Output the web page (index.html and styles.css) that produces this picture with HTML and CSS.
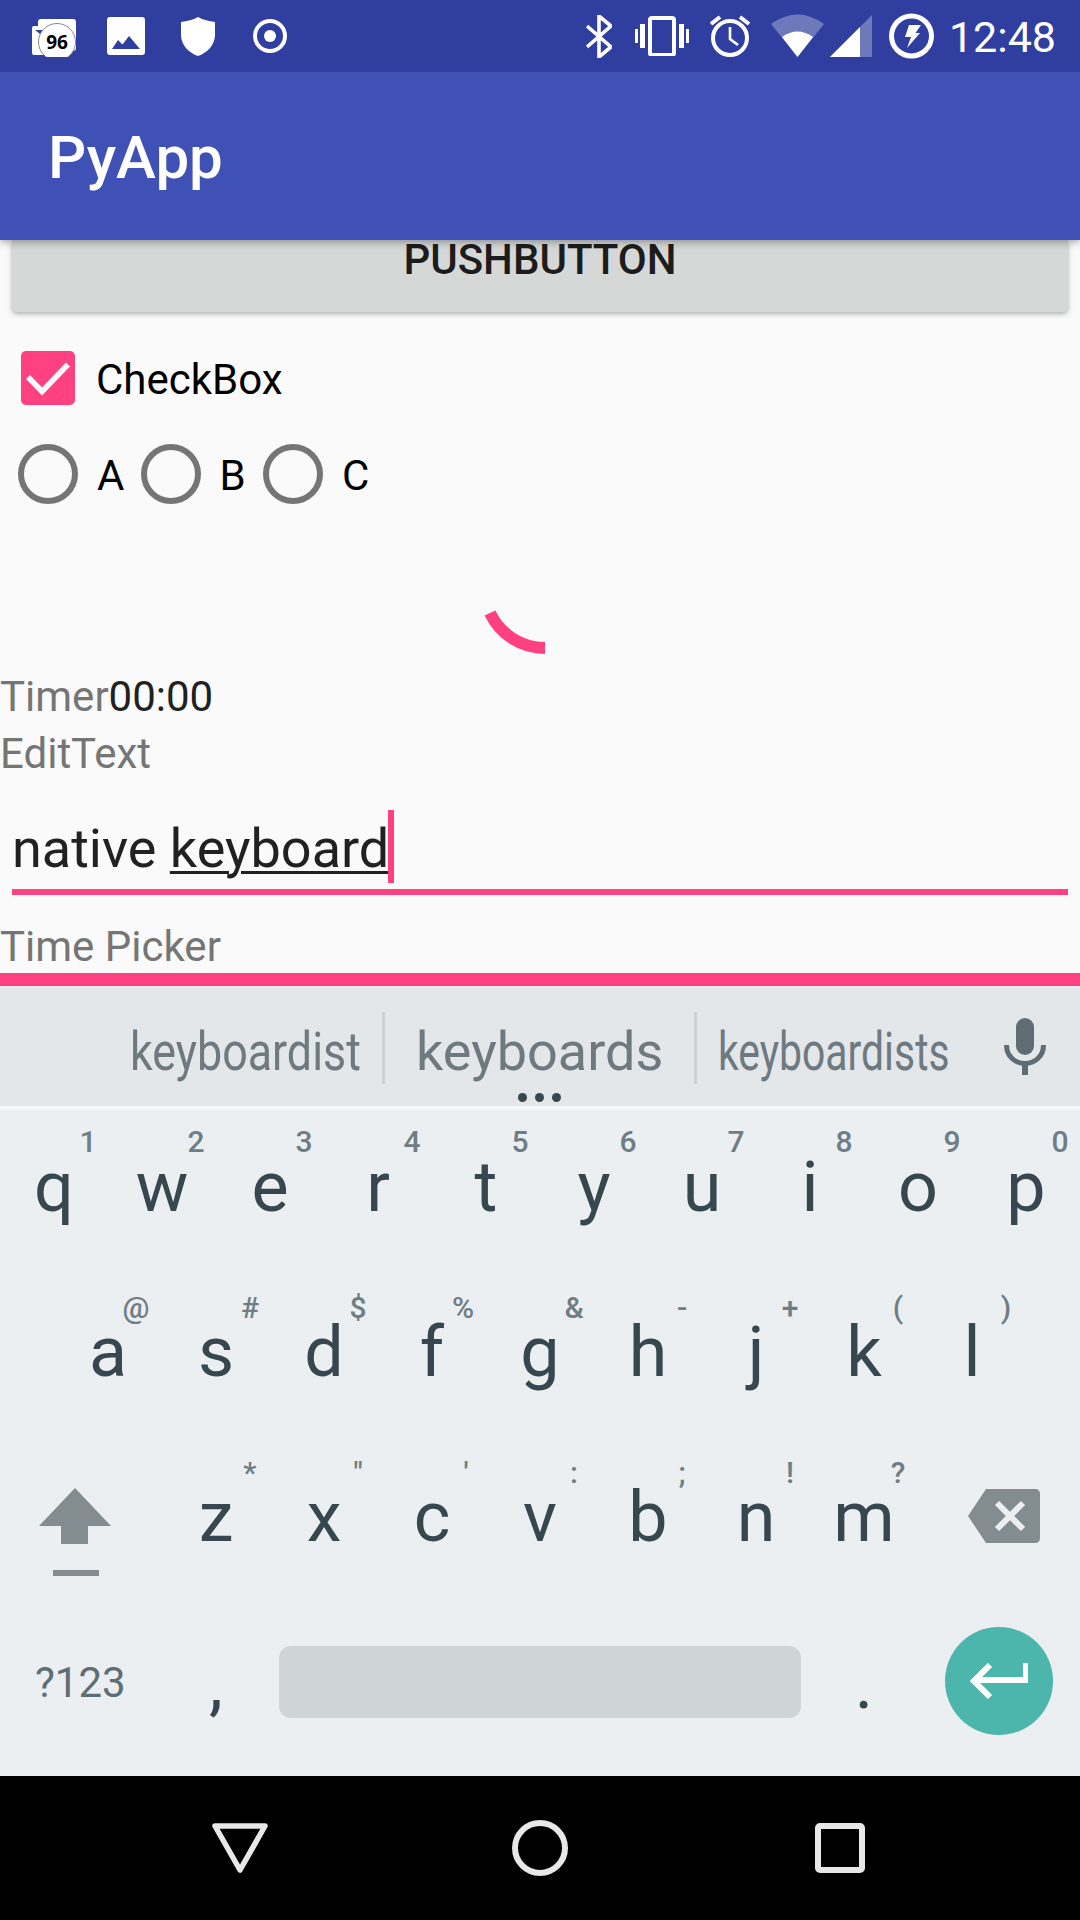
FILE: index.html
```html
<!DOCTYPE html>
<html lang="en">
<head>
<meta charset="utf-8">
<title>PyApp</title>
<link rel="stylesheet" href="styles.css">
</head>
<body>
<div class="screen">
  <header class="status">
    <div class="status-left">
      <svg class="i-cards" viewBox="0 0 44 38"><rect x="6" y="0" width="38" height="32" rx="3" fill="#fff"/><rect x="0" y="7" width="36" height="29" rx="2" fill="#fff"/><path d="M3 11l5 4 3-4z" fill="#303F9F"/><circle cx="25" cy="23" r="18.5" fill="#fff" stroke="#8a8a8a" stroke-width="1"/><text class="badge-text" x="25" y="30" text-anchor="middle">96</text></svg>
      <svg class="i-image" viewBox="0 0 38 38"><rect width="38" height="38" rx="3" fill="#fff"/><path d="M5 32L11 23L15.500 27.500L22 19L33 32Z" fill="#303F9F"/></svg>
      <svg class="i-shield" viewBox="0 0 34 39"><path d="M17 0C22 3 28 4 34 5V18C34 28 26 36 17 39C8 36 0 28 0 18V5C6 4 12 3 17 0Z" fill="#fff"/></svg>
      <svg class="i-target" viewBox="0 0 34 34"><circle cx="17" cy="17" r="15" fill="none" stroke="#fff" stroke-width="4"/><circle cx="17" cy="17" r="6" fill="#fff"/></svg>
    </div>
    <div class="status-right">
      <svg class="i-bt" viewBox="0 0 26 43"><path d="M1 11L25 32L13 42V1L25 11L1 32" fill="none" stroke="#fff" stroke-width="3.6"/></svg>
      <svg class="i-vib" viewBox="0 0 54 40"><rect x="15" y="2" width="24" height="37" rx="2" fill="none" stroke="#fff" stroke-width="4"/><rect x="0" y="13" width="3" height="14" fill="#fff"/><rect x="5" y="8" width="5" height="24" fill="#fff"/><rect x="44" y="8" width="5" height="24" fill="#fff"/><rect x="51" y="13" width="3" height="14" fill="#fff"/></svg>
      <svg class="i-alarm" viewBox="0 0 42 42"><circle cx="21" cy="23" r="17" fill="none" stroke="#fff" stroke-width="4"/><path d="M21 12V24L29 30" fill="none" stroke="#fff" stroke-width="2.6"/><path d="M2 9L11 2M40 9L31 2" fill="none" stroke="#fff" stroke-width="4"/></svg>
      <svg class="i-wifi" viewBox="0 0 53 43"><path d="M0 10Q26.500 -9 53 10L26.500 43Z" fill="#fff" opacity=".3"/><path d="M11 23Q26.500 12 42 23L26.500 43Z" fill="#fff"/></svg>
      <svg class="i-signal" viewBox="0 0 42 42"><path d="M0 42L42 0V42Z" fill="#fff" opacity=".3"/><path d="M0 42L30 12V42Z" fill="#fff"/></svg>
      <svg class="i-bolt" viewBox="0 0 45 46"><circle cx="22.500" cy="23" r="20" fill="none" stroke="#fff" stroke-width="5"/><path d="M20 12H32L26.500 20H31L18 35L22 24H16Z" fill="#fff"/></svg>
      <span class="clock">12:48</span>
    </div>
  </header>

  <div class="appbar"><span class="app-title">PyApp</span></div>

  <main class="content">
    <div class="push-button">PUSHBUTTON</div>
    <div class="check-row">
      <svg class="check-box" viewBox="0 0 54 54"><rect width="54" height="54" rx="5" fill="#FF4081"/><path d="M7 26L21 40.500L47 13.500" fill="none" stroke="#FAFAFA" stroke-width="5.500"/></svg>
      <span class="check-label">CheckBox</span>
    </div>
    <div class="radio-row">
      <span class="radio"></span><span class="radio-label">A</span>
      <span class="radio"></span><span class="radio-label">B</span>
      <span class="radio"></span><span class="radio-label">C</span>
    </div>
    <div class="spinner-wrap">
      <svg class="spinner" viewBox="0 0 144 144"><path d="M22 95A61 61 0 0 0 77 130" fill="none" stroke="#FF4081" stroke-width="12"/></svg>
    </div>
    <div class="line"><span class="muted">Timer</span><span class="dark">00:00</span></div>
    <div class="line muted edit-label">EditText</div>
    <div class="input"><span class="input-text">native <span class="composing">keyboard</span></span><span class="caret"></span></div>
    <div class="line muted time-label">Time Picker</div>
  </main>

  <div class="pink-bar"></div>

  <section class="keyboard">
    <div class="suggestions">
      <span class="sugg s1">keyboardist</span>
      <span class="sep"></span>
      <span class="sugg s2">keyboards</span>
      <span class="sep"></span>
      <span class="sugg s3">keyboardists</span>
      <svg class="mic" viewBox="0 0 42 57"><rect x="12" y="0" width="18" height="37" rx="9" fill="#5F6C74"/><path d="M2.500 27C2.500 39 12 45.500 21 45.500S39.500 39 39.500 27" fill="none" stroke="#5F6C74" stroke-width="5"/><rect x="18" y="45" width="6" height="12" fill="#5F6C74"/></svg>
      <div class="dots"><i></i><i></i><i></i></div>
    </div>
    <div class="kb-line"></div>
    <div class="kb-row row-1">
      <div class="key">q<span class="hint">1</span></div>
      <div class="key">w<span class="hint">2</span></div>
      <div class="key">e<span class="hint">3</span></div>
      <div class="key">r<span class="hint">4</span></div>
      <div class="key">t<span class="hint">5</span></div>
      <div class="key">y<span class="hint">6</span></div>
      <div class="key">u<span class="hint">7</span></div>
      <div class="key">i<span class="hint">8</span></div>
      <div class="key">o<span class="hint">9</span></div>
      <div class="key">p<span class="hint">0</span></div>
    </div>
    <div class="kb-row row-2">
      <div class="key">a<span class="hint hint-at">@</span></div>
      <div class="key">s<span class="hint">#</span></div>
      <div class="key">d<span class="hint">$</span></div>
      <div class="key">f<span class="hint hint-pct">%</span></div>
      <div class="key">g<span class="hint">&amp;</span></div>
      <div class="key">h<span class="hint">-</span></div>
      <div class="key">j<span class="hint">+</span></div>
      <div class="key">k<span class="hint">(</span></div>
      <div class="key">l<span class="hint">)</span></div>
    </div>
    <div class="kb-row row-3">
      <div class="key-wide shift"><svg class="shift-icon" viewBox="0 0 72 89"><path d="M36 0L72 38H49V56H22V38H0Z" fill="#838C90"/><rect x="14" y="82" width="46" height="6" fill="#838C90"/></svg></div>
      <div class="key">z<span class="hint">*</span></div>
      <div class="key">x<span class="hint">"</span></div>
      <div class="key">c<span class="hint">'</span></div>
      <div class="key">v<span class="hint">:</span></div>
      <div class="key">b<span class="hint">;</span></div>
      <div class="key">n<span class="hint">!</span></div>
      <div class="key">m<span class="hint">?</span></div>
      <div class="key-wide back"><svg class="back-icon" viewBox="0 0 72 54"><path d="M18 0H67Q72 0 72 5V49Q72 54 67 54H18L0 27Z" fill="#838C90"/><path d="M29 14L55 40M55 14L29 40" stroke="#ECEFF1" stroke-width="6"/></svg></div>
    </div>
    <div class="kb-row row-4">
      <div class="key-wide sym">?123</div>
      <div class="key">,</div>
      <div class="space"></div>
      <div class="key">.</div>
      <div class="key-wide enter-key"><div class="enter"><svg class="enter-icon" viewBox="0 0 58 36"><path d="M56 0V17H5M20 2L4 18L20 34" fill="none" stroke="#fff" stroke-width="6"/></svg></div></div>
    </div>
  </section>

  <nav class="navbar">
    <svg class="nav-back" viewBox="0 0 56 50"><path d="M3 3H53L28 47Z" fill="none" stroke="#E8E8E8" stroke-width="5.500" stroke-linejoin="round"/></svg>
    <svg class="nav-home" viewBox="0 0 56 56"><circle cx="28" cy="28" r="25" fill="none" stroke="#E8E8E8" stroke-width="6"/></svg>
    <svg class="nav-recent" viewBox="0 0 50 50"><rect x="3" y="3" width="44" height="44" rx="2" fill="none" stroke="#E8E8E8" stroke-width="6"/></svg>
  </nav>
</div>
</body>
</html>
```
FILE: styles.css
```css
* { box-sizing: border-box; }
html, body { margin: 0; padding: 0; }
body { font-family: Roboto, "Liberation Sans", sans-serif; background: #FAFAFA; }
svg { display: block; flex: none; }

.screen { width: 1080px; height: 1920px; display: flex; flex-direction: column; overflow: hidden; }

/* status bar */
.status { height: 72px; flex: none; background: #303F9F; display: flex; justify-content: space-between; padding: 0 24px 0 32px; position: relative; z-index: 3; }
.status-left, .status-right { display: flex; align-items: flex-start; }
.i-cards { width: 44px; height: 38px; margin-top: 19px; }
.badge-text { font: 700 19px "Open Sans", sans-serif; fill: #000; }
.i-image { width: 38px; height: 38px; margin: 17px 0 0 31px; }
.i-shield { width: 34px; height: 39px; margin: 17px 0 0 36px; }
.i-target { width: 34px; height: 34px; margin: 19px 0 0 38px; }
.i-bt { width: 26px; height: 43px; margin-top: 15px; }
.i-vib { width: 54px; height: 40px; margin: 16px 0 0 23px; }
.i-alarm { width: 42px; height: 42px; margin: 15px 0 0 20px; }
.i-wifi { width: 53px; height: 43px; margin: 14px 0 0 20px; }
.i-signal { width: 42px; height: 42px; margin: 15px 0 0 6px; }
.i-bolt { width: 45px; height: 46px; margin: 13px 0 0 17px; }
.clock { font-size: 43px; line-height: 49px; color: #fff; margin: 13px 0 0 15px; }

/* app bar */
.appbar { height: 168px; flex: none; background: #3F51B5; display: flex; align-items: center; padding: 3px 0 0 48px; position: relative; z-index: 2; box-shadow: 0 2px 8px rgba(0,0,0,.35); }
.app-title { font-size: 60px; font-weight: 500; color: #fff; }

/* content */
.content { height: 733px; flex: none; color: #000; }
.push-button { height: 72px; margin: 0 12px; background: #D6D7D7; border-radius: 0 0 5px 5px; box-shadow: 0 2px 5px rgba(0,0,0,.3); text-align: center; font-size: 42px; font-weight: 500; line-height: 40px; color: #1c1c1c; }
.check-row { height: 132px; display: flex; align-items: center; padding-left: 21px; }
.check-box { width: 54px; height: 54px; margin-top: -1px; }
.check-label { font-size: 42px; margin: 2px 0 0 21px; }
.radio-row { height: 60px; display: flex; align-items: center; padding-left: 18px; }
.radio { width: 60px; height: 60px; border: 6px solid #757575; border-radius: 50%; flex: none; }
.radio-label { font-size: 42px; margin: 2px 18.500px 0 19px; width: 25px; }
.spinner-wrap { height: 165px; display: flex; justify-content: center; padding-top: 14px; }
.spinner { width: 144px; height: 144px; }
.line { font-size: 42px; line-height: 56px; white-space: nowrap; }
.muted { color: #757575; }
.dark { color: #212121; }
.edit-label { padding-top: 1px; height: 57px; }
.input { height: 113px; margin: 0 12px; border-bottom: 6px solid #FF4081; display: flex; align-items: flex-start; padding-top: 28px; font-size: 54px; line-height: 63px; color: #212121; }
.input-text { white-space: pre; margin-top: 7px; }
.composing { text-decoration: underline; text-decoration-thickness: 3px; text-underline-offset: 4px; }
.caret { width: 6px; height: 73px; background: #FF4081; margin-left: -1px; }
.time-label { margin-top: 24px; }

.pink-bar { height: 13px; flex: none; background: #FF4081; }

/* keyboard */
.keyboard { height: 790px; flex: none; background: #ECEFF1; padding-top: 2px; color: #37474F; }
.suggestions { height: 118px; background: #E3E7EA; position: relative; }
.sugg { font-size: 54px; line-height: 63px; color: #6E7A80; position: absolute; top: 32px; white-space: nowrap; transform-origin: left top; }
.s1 { left: 130px; transform: scaleX(.83); }
.s2 { left: 416px; }
.s3 { left: 718px; transform: scaleX(.757); }
.sep { width: 3px; height: 72px; background: #CDD1D4; position: absolute; top: 24px; left: 382px; }
.sep ~ .sep { left: 694px; }
.mic { width: 42px; height: 57px; position: absolute; left: 1004px; top: 30px; }
.dots { position: absolute; left: 518px; top: 105px; display: flex; gap: 8px; }
.dots i { width: 9px; height: 9px; border-radius: 50%; background: #37474F; display: block; }
.kb-line { height: 4px; background: #F5F7F8; }

.kb-row { height: 166px; display: flex; }
.row-2 { padding-left: 54px; }
.row-4 { height: 168px; }
.key { flex: 0 0 108px; position: relative; text-align: center; font-size: 70px; line-height: 82px; padding-top: 35px; }
.row-1 .key { padding-top: 36px; }
.row-3 .key { padding-top: 34px; }
.hint { position: absolute; left: calc(50% + 34px); top: 14px; transform: translateX(-50%); font-size: 30px; line-height: 35px; font-weight: 500; color: #6F7E85; }
.hint-at { left: calc(50% + 28px); }
.hint-pct { left: calc(50% + 31px); }
.row-3 .hint { top: 13px; }
.key-wide { flex: 0 0 162px; position: relative; }
.shift-icon { width: 72px; height: 89px; margin: 46px 0 0 39px; }
.back-icon { width: 72px; height: 54px; margin: 47px 0 0 50px; }
.sym { font-size: 42px; line-height: 49px; padding: 50px 0 0 35px; color: #5F6E75; }
.space { flex: 0 0 522px; height: 72px; margin: 38px 9px 0; background: #CFD4D7; border-radius: 12px; }
.enter { width: 108px; height: 108px; border-radius: 50%; background: #4DB6AC; margin: 19px 0 0 27px; display: flex; align-items: center; justify-content: center; }
.enter-icon { width: 58px; height: 36px; }

/* navigation */
.navbar { height: 144px; flex: none; background: #000; position: relative; }
.nav-back, .nav-home, .nav-recent { position: absolute; }
.nav-back { width: 56px; height: 50px; left: 212px; top: 47px; }
.nav-home { width: 56px; height: 56px; left: 512px; top: 44px; }
.nav-recent { width: 50px; height: 50px; left: 815px; top: 47px; }
```
